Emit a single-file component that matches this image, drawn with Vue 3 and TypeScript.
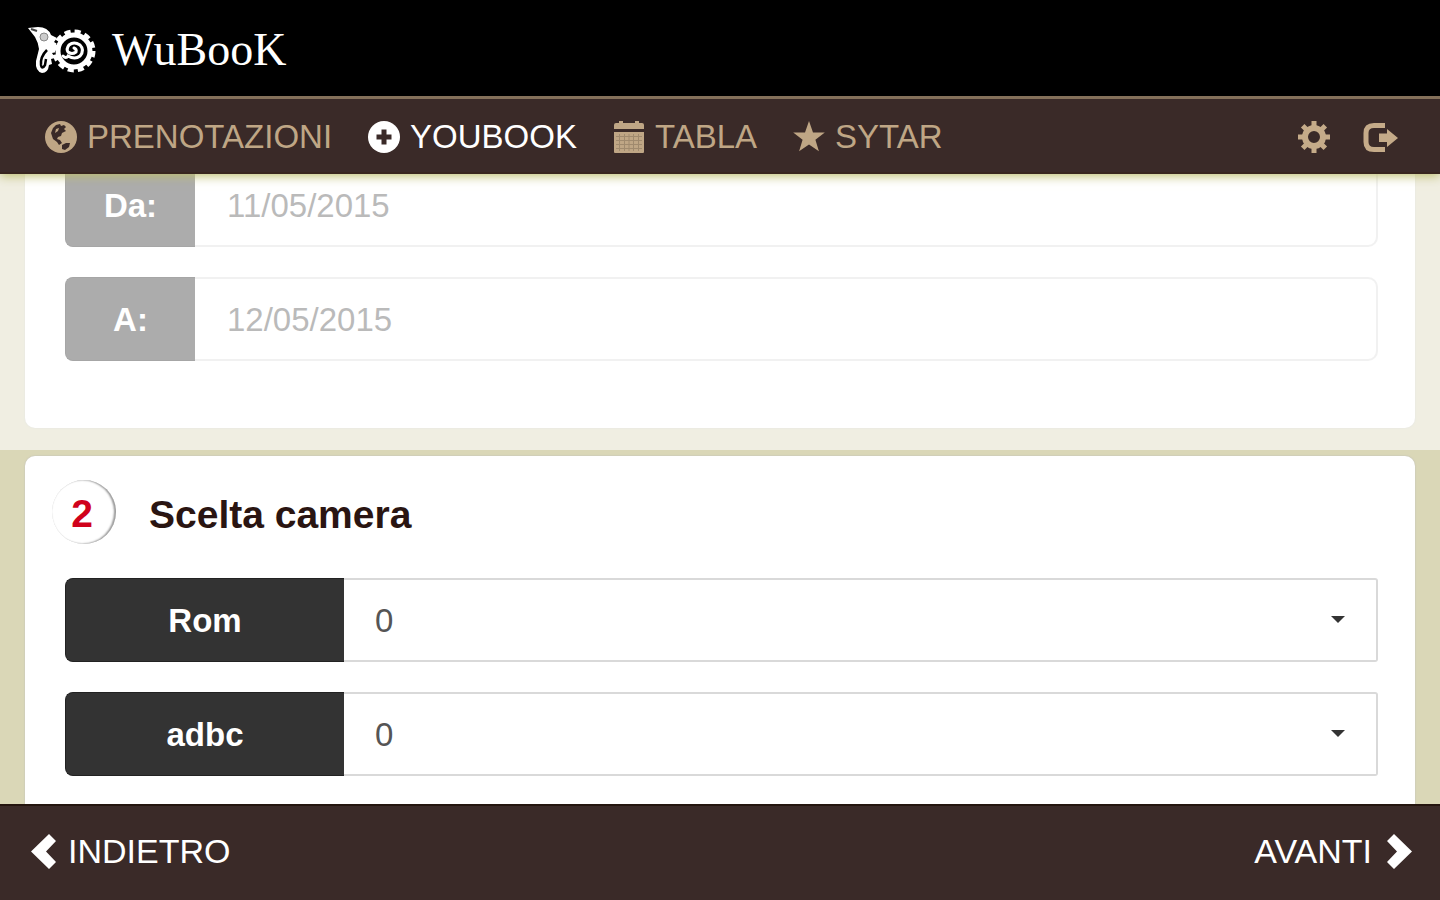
<script setup lang="ts">
import { ref } from 'vue'

interface NavItem {
  id: string
  label: string
}

interface Room {
  id: string
  name: string
  count: number
}

const navItems: NavItem[] = [
  { id: 'globe', label: 'PRENOTAZIONI' },
  { id: 'plus', label: 'YOUBOOK' },
  { id: 'calendar', label: 'TABLA' },
  { id: 'star', label: 'SYTAR' },
]
const active = ref('plus')

const dates = ref([
  { id: 'from', label: 'Da:', value: '11/05/2015' },
  { id: 'to', label: 'A:', value: '12/05/2015' },
])

const rooms = ref<Room[]>([
  { id: 'rom', name: 'Rom', count: 0 },
  { id: 'adbc', name: 'adbc', count: 0 },
])
const counts = [0, 1, 2, 3, 4, 5]
</script>

<template>
  <div class="app">
    <header class="top">
      <a class="brand" href="#" aria-label="WuBook">
        <svg class="brand-mark" viewBox="0 0 72 50" aria-hidden="true">
          <path d="M2 3 L12 2 Q22 2 25 10 L31 13 L28 17 L33 20 L28 22 L31 27 L26 28 L29 33 L25 34 L26 39 L23 40 Q22 48 16 48 Q9 46 10 36 L13 24 Q12 17 9 12 Z" fill="#fff" />
          <circle cx="18" cy="12" r="4" fill="#ccc" stroke="#888" stroke-width="1" />
          <path d="M5 4 L11 6" stroke="#444" stroke-width="2" />
          <path d="M21 25 Q14 32 15 40 Q16 45 19 40 L20 34" fill="none" stroke="#000" stroke-width="2.500" />
          <circle cx="48" cy="26" r="19" fill="#000" />
          <circle cx="48" cy="26" r="19" fill="none" stroke="#fff" stroke-width="5" stroke-dasharray="6 3.950" />
          <circle cx="48" cy="26" r="16" fill="none" stroke="#fff" stroke-width="5" />
          <path d="M37 31 Q40 34 42 31 Q49 35 54 31 Q59 25 54 20 Q48 16 43 20 Q40 24 42 27 Q46 30 50 27 Q51 24 48 23" fill="none" stroke="#fff" stroke-width="3" stroke-linecap="round" />
        </svg>
        <span class="brand-name">WuBooK</span>
      </a>
    </header>

    <nav class="bar">
      <div class="bar-main">
        <a
          v-for="item in navItems"
          :key="item.id"
          href="#"
          class="bar-link"
          :class="{ on: item.id === active }"
          @click.prevent="active = item.id"
        >
          <svg v-if="item.id === 'globe'" class="ico" viewBox="0 0 32 32" aria-hidden="true">
            <circle cx="16" cy="16" r="16" fill="currentColor" />
            <path class="cut" d="M11 4 L15 3 L16 5 L19 4 L21 6 L19 8 L21 10 L17 12 L16 15 L13 16 L12 18 L15 19 L17 22 L14 24 L12 21 L8 18 L6 12 L8 7 Z" />
            <path class="cut" d="M17 24 L21 22 L25 22 L24 26 L20 29 L17 28 Z" />
            <path d="M11 8 L14 7 L13 10 L10 12 Z" fill="currentColor" />
          </svg>
          <svg v-else-if="item.id === 'plus'" class="ico" viewBox="0 0 32 32" aria-hidden="true">
            <circle cx="16" cy="16" r="16" fill="currentColor" />
            <path class="cut" d="M13.500 8.500h5v5h5v5h-5v5h-5v-5h-5v-5h5z" />
          </svg>
          <svg v-else-if="item.id === 'calendar'" class="ico" viewBox="0 0 32 32" aria-hidden="true">
            <path d="M1 8V4q0-2 2-2h3V0h4v2h12V0h4v2h3q2 0 2 2v4zM1 11h30v20q0 1-1 1H2q-1 0-1-1z" fill="currentColor" />
            <path class="grid-lines" d="M3 15.500h26M3 19.500h26M3 23.500h26M3 27.500h26M6.500 13v17M11.500 13v17M16 13v17M20.500 13v17M25.500 13v17" />
          </svg>
          <svg v-else class="ico" viewBox="0 0 32 32" aria-hidden="true">
            <path d="M16 0l4 11.500 11.800.1-9.400 7.100 3.500 11.500L16 23.400 6.100 30.200l3.500-11.500L.2 11.600l11.800-.1z" fill="currentColor" />
          </svg>
          <span>{{ item.label }}</span>
        </a>
      </div>
      <div class="bar-tools">
        <button type="button" class="tool" aria-label="Impostazioni">
          <svg class="ico" viewBox="0 0 32 32" aria-hidden="true">
            <circle cx="16" cy="16" r="9" fill="none" stroke="currentColor" stroke-width="6" />
            <path d="M16 0v6M16 26v6M0 16h6M26 16h6M4.700 4.700l4.500 4.500M22.800 22.800l4.500 4.500M4.700 27.300l4.500-4.500M22.800 9.200l4.500-4.500" stroke="currentColor" stroke-width="5" />
          </svg>
        </button>
        <button type="button" class="tool" aria-label="Esci">
          <svg class="ico wide" viewBox="0 0 36 32" aria-hidden="true">
            <path d="M22 4.500H11Q3 4.500 3 12v9q0 7.500 8 7.500h11" fill="none" stroke="currentColor" stroke-width="5" />
            <path d="M16 12.500h8V8L35 17 24 26v-5h-8z" fill="currentColor" />
          </svg>
        </button>
      </div>
    </nav>

    <main class="content">
      <section class="step done">
        <div class="panel">
          <div v-for="d in dates" :key="d.id" class="field">
            <label class="tag" :for="d.id">{{ d.label }}</label>
            <input :id="d.id" v-model="d.value" class="box" type="text" />
          </div>
        </div>
      </section>

      <section class="step current">
        <div class="panel">
          <h2 class="heading">
            <span class="num">2</span>
            <span class="title">Scelta camera</span>
          </h2>
          <div v-for="r in rooms" :key="r.id" class="field">
            <label class="tag" :for="r.id">{{ r.name }}</label>
            <div class="pick">
              <select :id="r.id" v-model="r.count" class="box">
                <option v-for="n in counts" :key="n" :value="n">{{ n }}</option>
              </select>
              <svg class="caret" viewBox="0 0 14 7" aria-hidden="true">
                <path d="M0 0h14L7 7z" fill="#333" />
              </svg>
            </div>
          </div>
        </div>
      </section>
    </main>

    <footer class="foot">
      <button type="button" class="step-btn">
        <svg class="chev" viewBox="0 0 25 35" aria-hidden="true">
          <path d="M0 17.500L18 0l7 7-10 10.500L25 28l-7 7z" fill="currentColor" />
        </svg>
        <span>INDIETRO</span>
      </button>
      <button type="button" class="step-btn next">
        <span>AVANTI</span>
        <svg class="chev" viewBox="0 0 25 35" aria-hidden="true">
          <path d="M25 17.500L7 0 0 7l10 10.500L0 28l7 7z" fill="currentColor" />
        </svg>
      </button>
    </footer>
  </div>
</template>

<style>
body {
  margin: 0;
  background: #fff;
}
</style>

<style scoped>
.app {
  display: flex;
  flex-direction: column;
  height: 100vh;
  overflow: hidden;
  font-family: 'Liberation Sans', Arial, sans-serif;
  font-size: 33px;
  line-height: 40px;
}
.app *,
.app *::before {
  box-sizing: border-box;
}
button,
input,
select {
  font: inherit;
}
button {
  padding: 0;
  border: 0;
  background: none;
  cursor: pointer;
}
svg {
  display: block;
  flex: none;
}

.top {
  position: relative;
  z-index: 2;
  display: flex;
  flex: none;
  align-items: center;
  height: 96px;
  padding: 4px 26px 0;
  background: #000;
}
.brand {
  display: flex;
  align-items: center;
  gap: 14px;
  color: #fff;
  text-decoration: none;
}
.brand-mark {
  width: 72px;
  height: 50px;
}
.brand-name {
  font-family: 'Liberation Serif', 'Times New Roman', serif;
  font-size: 46px;
  line-height: 50px;
}

.bar {
  position: relative;
  z-index: 1;
  display: flex;
  flex: none;
  align-items: center;
  justify-content: space-between;
  height: 78px;
  padding: 2px 41px 0 45px;
  border-top: 3px solid #84705a;
  border-bottom: 2px solid #38261f;
  background: #3a2a28;
  box-shadow: 0 2px 10px #bcbc6c;
}
.bar-main {
  display: flex;
  gap: 36px;
}
.bar-link {
  display: flex;
  align-items: center;
  gap: 10px;
  color: #bfa685;
  text-decoration: none;
}
.bar-link.on {
  color: #fff;
}
.ico {
  width: 32px;
  height: 32px;
}
.ico.wide {
  width: 36px;
}
.cut {
  fill: #3a2a28;
}
.grid-lines {
  fill: none;
  stroke: #a08a6e;
  stroke-width: 1;
}
.bar-tools {
  display: flex;
  gap: 33px;
  color: #c5ab89;
}
.tool {
  color: inherit;
}

.content {
  display: flex;
  flex: 1;
  flex-direction: column;
  min-height: 0;
  overflow: hidden;
}
.step {
  padding: 0 25px;
  background: #dad7b7;
}
.step.done {
  flex: none;
  margin-top: -11px;
  padding-bottom: 22px;
  opacity: 0.4;
}
.step.current {
  display: flex;
  flex: 1;
  flex-direction: column;
  padding-top: 6px;
}
.panel {
  display: flex;
  flex-direction: column;
  gap: 30px;
  padding: 0 37px 67px 40px;
  background: #fff;
  box-shadow: 0 0 2px #bbb;
}
.done .panel {
  border-radius: 0 0 10px 10px;
}
.current .panel {
  flex: 1;
  padding-top: 24px;
  border-radius: 10px 10px 0 0;
}

.heading {
  display: flex;
  align-items: center;
  gap: 33px;
  margin: 0 0 4px -13px;
  color: #2a1512;
  font-size: 39px;
  font-weight: bold;
}
.title {
  padding-top: 5px;
}
.num {
  display: flex;
  align-items: center;
  justify-content: center;
  width: 64px;
  height: 64px;
  padding: 3px 4px 0 0;
  border-radius: 50%;
  color: #d0021b;
  box-shadow: inset -2px 0 2px #999, inset 0 0 1px #ccc;
}

.field {
  display: flex;
  height: 84px;
}
.tag {
  display: flex;
  flex: none;
  align-items: center;
  justify-content: center;
  width: 130px;
  padding-top: 2px;
  border: 1px solid #222;
  border-right: 0;
  border-radius: 8px 0 0 8px;
  background: #333;
  color: #fff;
  font-weight: bold;
}
.current .tag {
  width: 279px;
}
.box {
  flex: 1;
  width: 100%;
  min-width: 0;
  height: 100%;
  padding: 2px 32px 0;
  border: 2px solid #ddd;
  border-left: 0;
  border-radius: 0 10px 10px 0;
  outline: 0;
  background: #fff;
  color: #555;
}
.pick {
  position: relative;
  flex: 1;
}
.pick .box {
  padding: 2px 31px 0;
  border-color: #d9d9d9;
  border-radius: 0 3px 3px 0;
  appearance: none;
}
.caret {
  position: absolute;
  top: 38px;
  right: 33px;
  width: 14px;
  height: 7px;
  pointer-events: none;
}

.foot {
  position: relative;
  display: flex;
  flex: none;
  align-items: center;
  justify-content: space-between;
  height: 96px;
  padding: 0 28px 4px 31px;
  border-top: 2px solid #24150f;
  background: #3a2a28;
  font-size: 34px;
}
.step-btn {
  display: flex;
  align-items: center;
  gap: 12px;
  color: #fff;
}
.step-btn.next {
  gap: 15px;
}
.chev {
  width: 25px;
  height: 35px;
}
</style>
